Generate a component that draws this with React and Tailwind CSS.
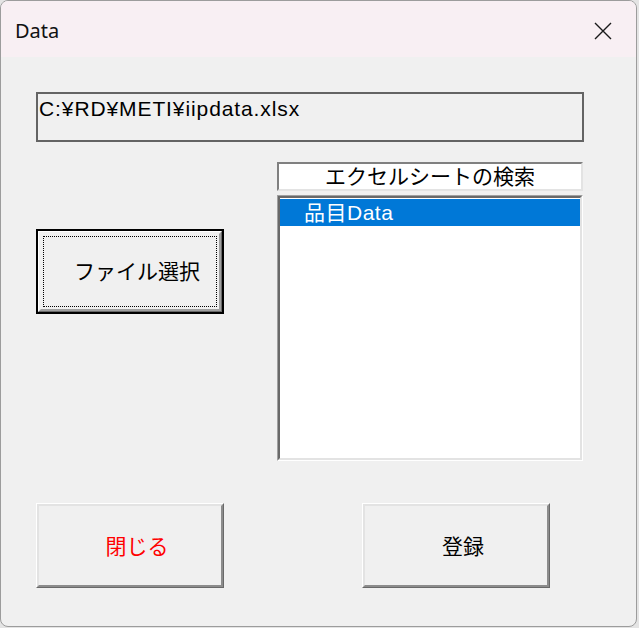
import React from "react";

const jp = { fontFamily: '"Liberation Sans", "Noto Sans CJK JP", sans-serif' };

function RaisedButton({ children, className = "" }) {
  return (
    <div className="w-[188px] h-[85px] border border-t-white border-l-white border-b-[#696969] border-r-[#696969]">
      <div className="w-full h-full border-2 border-t-[#e3e3e3] border-l-[#e3e3e3] border-b-[#8c8c8c] border-r-[#8c8c8c] flex items-center justify-center pl-[14px] pt-[2px]">
        <span className={`text-[21px] leading-none ${className}`} style={jp}>{children}</span>
      </div>
    </div>
  );
}

function DefaultButton({ children }) {
  return (
    <div className="w-[188px] h-[85px] border-2 border-black">
      <div className="w-full h-full border border-t-white border-l-white border-b-[#696969] border-r-[#696969]">
        <div className="w-full h-full border-2 border-t-[#f0f0f0] border-l-[#f0f0f0] border-b-[#a0a0a0] border-r-[#a0a0a0] p-[2px]">
          <div className="w-full h-full border border-dotted border-black flex items-center justify-center pl-[14px]">
            <span className="text-[21px] leading-none text-black" style={jp}>{children}</span>
          </div>
        </div>
      </div>
    </div>
  );
}

export default function App() {
  return (
    <div className="w-[639px] h-[628px] bg-[#e4e4e4] overflow-hidden">
      <div className="w-[637px] h-[627px] rounded-[8px] border border-[#9c9c9c] bg-[#f0f0f0] overflow-hidden">
        {/* title bar */}
        <div className="h-[56px] bg-[#f8eff3] flex items-center justify-between pl-[14px] pr-[24px] pt-[4px]">
          <span className="text-[20px] text-[#111] leading-none" style={{ fontFamily: '"Noto Sans", sans-serif' }}>Data</span>
          <svg width="18" height="18" viewBox="0 0 18 18" className="text-[#1a1a1a]">
            <path d="M1 1 L17 17 M17 1 L1 17" stroke="currentColor" strokeWidth="1.4" fill="none" />
          </svg>
        </div>

        {/* client */}
        <div className="pl-[35px]">
          <div className="mt-[35px] w-[548px] h-[50px] border-2 border-[#646464] px-[1px] pt-[3px]">
            <span className="text-[21px] leading-[24px] tracking-[0.9px] text-black" style={jp}>C:¥RD¥METI¥iipdata.xlsx</span>
          </div>

          <div className="mt-[20px] flex gap-[53px]">
            <div className="w-[188px] pt-[67px]">
              <DefaultButton>ファイル選択</DefaultButton>
            </div>
            <div className="w-[306px] flex flex-col">
              <div className="h-[29px] bg-white border-2 border-t-[#808080] border-l-[#808080] border-b-[#e3e3e3] border-r-[#e3e3e3] flex items-center justify-center">
                <span className="text-[21px] leading-none text-black" style={jp}>エクセルシートの検索</span>
              </div>
              <div className="mt-[4px] h-[266px] border border-t-[#a0a0a0] border-l-[#a0a0a0] border-b-white border-r-white">
                <div className="w-full h-full bg-white border-2 border-t-[#696969] border-l-[#696969] border-b-[#e3e3e3] border-r-[#e3e3e3] pt-[1px]">
                  <div className="h-[27px] bg-[#0078d7] flex items-center pl-[24px]">
                    <span className="text-[21px] leading-none text-white tracking-[0.5px]" style={jp}>品目Data</span>
                  </div>
                </div>
              </div>
            </div>
          </div>

          <div className="mt-[42px] flex gap-[138px]">
            <RaisedButton className="text-[#ff0000]">閉じる</RaisedButton>
            <RaisedButton className="text-black">登録</RaisedButton>
          </div>
        </div>
      </div>
    </div>
  );
}
